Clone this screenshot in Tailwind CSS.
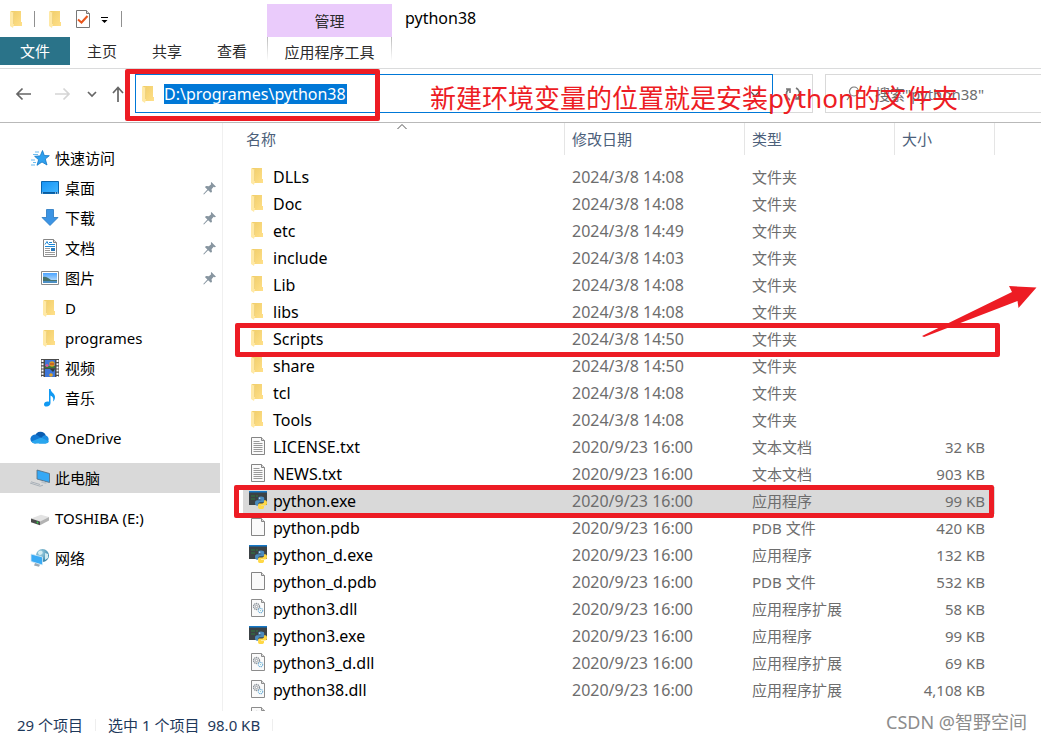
<!DOCTYPE html>
<html lang="zh-CN">
<head>
<meta charset="utf-8">
<title>python38</title>
<script src="https://cdn.jsdelivr.net/npm/@tailwindcss/browser@4"></script>
</head>
<body class="relative flex h-screen flex-col overflow-hidden bg-white font-['Noto_Sans','Noto_Sans_CJK_SC',sans-serif] text-[15px] leading-5 text-black">

<svg class="absolute size-0" aria-hidden="true">
  <defs>
    <linearGradient id="gf" x1="0" x2="1" y1="0" y2="1"><stop offset="0" stop-color="#f0cd69"/><stop offset="1" stop-color="#ffe08a"/></linearGradient>
    <linearGradient id="gs" x1="0" x2="0" y1="0" y2="1"><stop offset="0" stop-color="#4aa3ff"/><stop offset="1" stop-color="#d9edfb"/></linearGradient>
    <linearGradient id="gm" x1="0" x2="1" y1="0" y2="1"><stop offset="0" stop-color="#1593f5"/><stop offset="1" stop-color="#45b8ff"/></linearGradient>
    <radialGradient id="gg" cx=".35" cy=".3" r=".8"><stop offset="0" stop-color="#a9d8e8"/><stop offset="1" stop-color="#27789f"/></radialGradient>
  </defs>
  <symbol id="folder" viewBox="0 0 18 18"><path d="M3 1h10v11h1v4H4z" fill="url(#gf)"/><path d="M2 1l4 2v11l-1 4-3-2z" fill="#ffe9a6"/><path d="M5.500 3v11" stroke="#e6c566" stroke-width=".6"/></symbol>
  <symbol id="txt" viewBox="0 0 18 18"><path d="M2.500.5h10l3 3v14h-13z" fill="#fafafa" stroke="#858585"/><path d="M12.500.5v3h3" fill="#ddd" stroke="#858585"/><path d="M4.500 4.500h6M4.500 6.500h9M4.500 8.500h9M4.500 10.500h9M4.500 12.500h9M4.500 14.500h9" stroke="#999"/></symbol>
  <symbol id="blank" viewBox="0 0 18 18"><path d="M2.500.5h10l3 3v14h-13z" fill="#fafafa" stroke="#858585"/><path d="M12.500.5v3h3" fill="#ddd" stroke="#858585"/></symbol>
  <symbol id="dll" viewBox="0 0 18 18"><path d="M2.500.5h10l3 3v14h-13z" fill="#fafafa" stroke="#8c8c8c"/><path d="M12.500.5v3h3" fill="#ddd" stroke="#8c8c8c"/><circle cx="7.500" cy="7.500" r="3" fill="#eee" stroke="#8b9299" stroke-width="1.300" stroke-dasharray="1.300 .6"/><circle cx="7.500" cy="7.500" r="1.200" fill="#fff" stroke="#8b9299" stroke-width=".8"/><circle cx="11.500" cy="11.500" r="2.200" fill="#fff" stroke="#76b2d8" stroke-width="1.200" stroke-dasharray="1.200 .5"/><circle cx="11.500" cy="11.500" r=".7" fill="#9cc"/></symbol>
  <symbol id="py" viewBox="0 0 18 18"><path d="M0 0h18v14H0z" fill="#3c4245"/><path d="M0 0h18v1.500H0z" fill="#1578c8"/><path d="M2 5h4M7 5h2M2 8h4" stroke="#2f7a3e"/><path d="M12 5.500c-2.300 0-2.700.8-2.700 1.800v1.400h3v.6H8.200C6.800 9.300 6 10.300 6 12s.8 2.700 2 2.700h1.200v-1.500c0-1 .8-1.900 1.900-1.900h2.700c.8 0 1.400-.6 1.400-1.400V7.300c0-1.100-1-1.800-3.200-1.800z" fill="#4b8bbe"/><path d="M12.200 18c2.300 0 2.800-.8 2.800-1.800V15h-3v-.6h4c1.400 0 2-.8 2-2.500s-.6-2.700-1.800-2.700h-1.100v1.400c0 1-.8 1.900-1.900 1.900h-2.700c-.8 0-1.400.6-1.400 1.400v2.500c0 1.100 1 1.600 3.100 1.600z" fill="#ffd845"/><circle cx="10.700" cy="7.200" r=".6" fill="#fff"/></symbol>
  <symbol id="star" viewBox="0 0 20 18"><path d="M12.500 1.500l1.800 5 5 .2-4 3.300 1.700 6-5-3-5 3.300 1.600-5.600-4-3.400 5.600-.4z" fill="#2fa0ee" stroke="#1276c4" stroke-width=".8"/><path d="M5 3h4M3 5.500h5M1 11h4M3 13.500h3M1 16h4" stroke="#6bbcf0"/></symbol>
  <symbol id="desktop" viewBox="0 0 18 18"><path d="M.5 2.500h17v12H.5z" fill="url(#gm)" stroke="#0b66ae"/><path d="M1 13.500h16" stroke="#0a5a9c"/><path d="M1 14h1M14 14h1M16 14h1" stroke="#fff"/></symbol>
  <symbol id="down" viewBox="0 0 18 18"><path d="M5.500.5h7v8H17l-8 8-8-8h4.500z" fill="#3c94e4" stroke="#2677c0" stroke-width=".8"/></symbol>
  <symbol id="doc" viewBox="0 0 18 18"><path d="M2.500.5h10l3 3v14h-13z" fill="#fff" stroke="#858585"/><path d="M12.500.5v3h3" fill="#ddd" stroke="#858585"/><path d="M4 5.500l2-3 1.500 3M8 3.500h3M8 5.500h6M4 7.500h10" stroke="#1b87d6" fill="none"/><path d="M4 9.500h5M4 11.500h5M4 13.500h10M4 15.500h10" stroke="#999"/><path d="M10 9h4v3h-4z" fill="#2c79b8"/></symbol>
  <symbol id="pic" viewBox="0 0 18 18"><path d="M.5 2.500h17v13H.5z" fill="#fff" stroke="#8a8a8a"/><path d="M2 4h14v10H2z" fill="url(#gs)"/><path d="M2 8c3-1 5 1 8 3l6 0v1.500H2z" fill="#47716b"/><path d="M2 12h14v2H2z" fill="#4c8fc4"/></symbol>
  <symbol id="video" viewBox="0 0 18 18"><path d="M0 0h18v18H0z" fill="#4a4a4a"/><path d="M1.500 1v17M16.500 1v17" stroke="#fff" stroke-width="2" stroke-dasharray="2 1.200"/><path d="M4 1h10v8H4zM4 10h10v8H4z" fill="#3e76d8"/><path d="M4 7h10v2H4z" fill="#397a35"/><circle cx="11" cy="5" r="2.700" fill="#d89a24"/><path d="M9 5h4" stroke="#b73526"/><circle cx="6" cy="6.500" r="1.500" fill="#d75a9a"/><path d="M9 10h5l-2 3z" fill="#313b36"/><circle cx="10" cy="16" r="1.800" fill="#e2a427"/></symbol>
  <symbol id="music" viewBox="0 0 18 18"><path d="M8 0h1.500c.5 3.500 4.500 4.500 4.500 8 0 2-.8 3.500-2 4.500 1-3.500-.5-5-2.500-6V14c0 2-1.800 3.500-3.800 3.500S3 16.600 3 15.200 4.500 12.500 6.500 12.500c.6 0 1.100.1 1.500.3z" fill="#1199f2"/></symbol>
  <symbol id="cloud" viewBox="0 0 20 18"><path d="M5 7a5.700 5.700 0 0 1 10.800-.5L10 12z" fill="#0a5cb0"/><path d="M5 14.500A4.500 4.500 0 1 1 7 6l8 6z" fill="#1278d2"/><path d="M12 8a4 4 0 0 1 4-1.600 4.300 4.300 0 0 1-.5 8.100H9z" fill="#1c8de2"/><path d="M1.500 12.500L11 8.500l8 4c-.6 1.200-1.800 2-3.500 2H5c-1.500 0-2.800-.8-3.500-2z" fill="#29a6ee"/></symbol>
  <symbol id="pc" viewBox="0 0 20 18"><path d="M7 1l12.500 3.500v9L7 10z" fill="#35a8f5" stroke="#57697a" stroke-width=".8"/><path d="M12 12l-1 1.500 5 1.500 1-1.500" fill="#b8c2ca"/><path d="M0 14l10 3.200 3-1M1 12.800l9 2.700" stroke="#a8b0b8" fill="none"/></symbol>
  <symbol id="drive" viewBox="0 0 20 18"><path d="M1 9.500l10-3.700 8 2.200-9 4.500z" fill="#e3e3e3"/><path d="M1 9.500l9 3v3.800l-9-3z" fill="#4b4b4b"/><path d="M10 12.500L19 8v3.500l-9 4.800z" fill="#b3b3b3"/><circle cx="7.500" cy="13.500" r=".9" fill="#35d24a"/></symbol>
  <symbol id="net" viewBox="0 0 20 18"><circle cx="12.500" cy="6.500" r="6.500" fill="url(#gg)"/><path d="M8 3c3-3 6 0 4 2s-4 1-4-2zM15 4l3 1v4l-3 2z" fill="#d3ecf1"/><path d="M1 5l11.500 3v8L1 12.500z" fill="#3aabf5" stroke="#d6ebf7" stroke-width=".8"/><path d="M5 14l-1 2.500 5 1.200 1-2" fill="#9aa9b5"/></symbol>
  <symbol id="pin" viewBox="0 0 14 14"><path d="M9 0l5 5-1.500.6-1-.4-2.300 2.500.5 2.800-1.200 1.200-3-2.700L1 13.500.3 13 4.700 8 2 5.500 3.500 4.300l2.800.4L8.800 2.400 8.400 1z" fill="#8795a0"/></symbol>
</svg>

<!-- Title bar and ribbon tabs -->
<header class="flex h-[69px] shrink-0 border-b border-[#dadbdc]">
  <div class="flex w-[267px] shrink-0 flex-col">
    <div class="flex h-[37px] items-center pl-2">
      <svg class="size-[18px]"><use href="#folder"/></svg>
      <span class="ml-2 h-4 w-px bg-[#909090]"></span>
      <svg class="ml-3 size-[18px]"><use href="#folder"/></svg>
      <button class="ml-[10px] size-[18px]" aria-label="属性"><svg class="size-[18px]" viewBox="0 0 18 18"><path d="M1.500.5h10l3 3v14h-13z" fill="#fff" stroke="#777"/><path d="M11.500.5v3h3" fill="#ddd" stroke="#777"/><path d="M3 9.500l3.500 3 6-6.500" fill="none" stroke="#e8561c" stroke-width="2"/></svg></button>
      <button class="ml-[6px] size-3" aria-label="自定义快速访问工具栏"><svg class="size-3" viewBox="0 0 12 12"><path d="M2 4h7v1H2zM2.500 7h6l-3 3z"/></svg></button>
      <span class="ml-[10px] h-4 w-px bg-[#909090]"></span>
    </div>
    <nav class="flex h-7 text-[#2b2b2b]">
      <button class="w-[70px] bg-[#2a7389] text-white">文件</button>
      <button class="w-16">主页</button>
      <button class="w-[66px]">共享</button>
      <button class="w-16">查看</button>
    </nav>
  </div>
  <div class="flex w-[125px] shrink-0 flex-col pt-1 text-[#2b2b2b]">
    <div class="flex h-[33px] items-center justify-center bg-[#eacbfb]">管理</div>
    <div class="flex h-6">
      <span class="w-px bg-linear-to-b from-[#bbb] to-white"></span>
      <button class="h-[30px] flex-1 whitespace-nowrap">应用程序工具</button>
      <span class="w-px bg-linear-to-b from-[#bbb] to-white"></span>
    </div>
  </div>
  <h1 class="pt-2 pl-[13px] text-base leading-5">python38</h1>
</header>

<!-- Address bar -->
<div class="flex h-[54px] shrink-0 border-b border-[#b9b9b9] pt-[5px]">
  <div class="flex h-10 w-[135px] shrink-0 items-center pl-[15px]">
    <button aria-label="后退"><svg class="h-4 w-[18px]" viewBox="0 0 18 16" fill="none" stroke="#666" stroke-width="1.700"><path d="M16 8H2M7.500 2.500L2 8l5.500 5.500"/></svg></button>
    <button class="ml-[21px]" aria-label="前进"><svg class="h-4 w-[18px]" viewBox="0 0 18 16" fill="none" stroke="#d5d5d5" stroke-width="1.700"><path d="M1 8h14M9.500 2.500L15 8l-5.500 5.500"/></svg></button>
    <button class="ml-[15px]" aria-label="最近浏览的位置"><svg class="h-3 w-[10px]" viewBox="0 0 10 12" fill="none" stroke="#666" stroke-width="1.700"><path d="M1 4l4 4 4-4"/></svg></button>
    <button class="ml-[15px]" aria-label="上移"><svg class="h-[18px] w-3" viewBox="0 0 12 18" fill="none" stroke="#666" stroke-width="1.700"><path d="M6 17V3M1 8l5-5.500L11 8"/></svg></button>
  </div>
  <div class="flex h-[39px] w-[638px] shrink-0 items-center border border-[#0078d7] pl-1">
    <svg class="size-[18px] shrink-0"><use href="#folder"/></svg>
    <input class="ml-[6px] h-5 w-[183px] bg-[#0078d7] text-base leading-5 text-white outline-none" aria-label="地址" value="D:\programes\python38">
    <button class="mr-3 ml-auto" aria-label="历史记录"><svg class="h-3 w-[10px]" viewBox="0 0 10 12" fill="none" stroke="#555" stroke-width="1.300"><path d="M1 4l4 4 4-4"/></svg></button>
  </div>
  <button class="flex h-[39px] w-10 shrink-0 items-center justify-center border border-l-0 border-[#d9d9d9]" aria-label="刷新"><svg class="size-[18px]" viewBox="0 0 18 18" fill="none" stroke="#777" stroke-width="1.600"><path d="M6 15A6.500 6.500 0 0 1 5 4M2 4h4v4M12 3a6.500 6.500 0 0 1 1 11M16 14h-4v-4"/></svg></button>
  <label class="ml-3 flex h-[39px] min-w-0 flex-1 items-center border border-r-0 border-[#d9d9d9] pl-5">
    <svg class="size-4 shrink-0" viewBox="0 0 16 16" fill="none" stroke="#777" stroke-width="1.200"><circle cx="8" cy="5.500" r="4.500"/><path d="M4.500 9L1 14"/></svg>
    <input class="ml-[13px] min-w-0 flex-1 outline-none placeholder:text-[#6d6d6d]" aria-label="搜索" placeholder='搜索"python38"'>
  </label>
</div>

<main class="flex min-h-0 flex-1 overflow-hidden">
  <!-- Navigation pane -->
  <nav class="w-[223px] shrink-0 border-r border-[#f0f0f0] pt-5 pr-[2px]" aria-label="导航窗格" id="nav"></nav>
  <!-- File list -->
  <section class="min-w-0 flex-1 pl-5">
    <table class="w-[752px] table-fixed border-collapse text-left">
      <colgroup><col class="w-[322px]"><col class="w-[180px]"><col class="w-[150px]"><col class="w-[100px]"></colgroup>
      <thead class="text-[#4c607a]">
        <tr class="h-10 align-top">
          <th class="relative p-0 font-normal"><div class="h-8 border-r border-[#e5e5e5] pt-[6px] pl-[3px]">名称</div>
            <svg class="absolute top-0 left-[153px] h-2 w-3" viewBox="0 0 12 8" fill="none" stroke="#555"><path d="M1.500 6L6 1.500 10.500 6"/></svg></th>
          <th class="p-0 font-normal"><div class="h-8 border-r border-[#e5e5e5] pt-[6px] pl-[7px]">修改日期</div></th>
          <th class="p-0 font-normal"><div class="h-8 border-r border-[#e5e5e5] pt-[6px] pl-[7px]">类型</div></th>
          <th class="p-0 font-normal"><div class="h-8 border-r border-[#e5e5e5] pt-[6px] pl-[7px]">大小</div></th>
        </tr>
      </thead>
      <tbody id="files"></tbody>
    </table>
  </section>
</main>

<footer class="flex h-[29px] shrink-0 items-center gap-3 pb-[2px] pl-[17px] text-[#1e395b]">
  <span>29 个项目</span><span class="h-3 w-px bg-[#eee]"></span>
  <span>选中 1 个项目</span><span class="-ml-1">98.0 KB</span><span class="h-3 w-px bg-[#eee]"></span>
</footer>

<!-- Annotations drawn over the window -->
<div class="pointer-events-none absolute top-[69px] left-[125px] h-[52px] w-[255px] rounded-xs border-5 border-[#ed1c24]"></div>
<div class="pointer-events-none absolute top-[323px] left-[235px] h-[34px] w-[765px] rounded-xs border-5 border-[#ed1c24]"></div>
<div class="pointer-events-none absolute top-[485px] left-[234px] h-[33px] w-[760px] rounded-xs border-5 border-[#ed1c24]"></div>
<p class="pointer-events-none absolute top-[82px] left-[430px] text-[26px] leading-8 whitespace-nowrap text-[#ed1c24]">新建环境变量的位置就是安装python的文件夹</p>
<svg class="pointer-events-none absolute top-[280px] left-[920px] h-[60px] w-[121px]" viewBox="0 0 121 60"><path d="M2 56L92 12l-3-6 27.500 1.500L98.500 28l-1-7L4 57z" fill="#ed1c24"/></svg>
<p class="pointer-events-none absolute right-[14px] bottom-[6px] text-lg leading-6 text-[#8c8c8c]">CSDN @智野空间</p>

<script>
const icon = (id, cls) => `<svg class="${cls}" aria-hidden="true"><use href="#${id}"/></svg>`;
const places = [
  ['star', '快速访问', 1], ['desktop', '桌面', 2, 1], ['down', '下载', 2, 1], ['doc', '文档', 2, 1], ['pic', '图片', 2, 1],
  ['folder', 'D', 2], ['folder', 'programes', 2], ['video', '视频', 2], ['music', '音乐', 2],
  ['cloud', 'OneDrive', 1], ['pc', '此电脑', 1], ['drive', 'TOSHIBA (E:)', 1], ['net', '网络', 1]
];
document.getElementById('nav').innerHTML = places.map(([i, name, level, pinned], n) =>
  `<a href="#" class="flex h-[30px] items-center ${level === 1 ? 'pl-[30px]' : 'pl-[41px]'} ${n > 8 ? 'mt-[10px]' : ''} ${i === 'pc' ? 'bg-[#d9d9d9]' : ''}">`
  + icon(i, level === 1 ? 'h-[18px] w-5 mr-[5px]' : 'size-[18px] mr-[6px]')
  + `<span>${name}</span>` + (pinned ? icon('pin', 'ml-auto mr-1 size-[13px]') : '') + '</a>').join('');

const dir = (name, time) => ['folder', name, '2024/3/8 ' + time, '文件夹', ''];
const file = (i, name, type, size) => [i, name, '2020/9/23 16:00', type, size + ' KB'];
const rows = [
  dir('DLLs', '14:08'), dir('Doc', '14:08'), dir('etc', '14:49'), dir('include', '14:03'), dir('Lib', '14:08'),
  dir('libs', '14:08'), dir('Scripts', '14:50'), dir('share', '14:50'), dir('tcl', '14:08'), dir('Tools', '14:08'),
  file('txt', 'LICENSE.txt', '文本文档', '32'), file('txt', 'NEWS.txt', '文本文档', '903'),
  file('py', 'python.exe', '应用程序', '99'), file('blank', 'python.pdb', 'PDB 文件', '420'),
  file('py', 'python_d.exe', '应用程序', '132'), file('blank', 'python_d.pdb', 'PDB 文件', '532'),
  file('dll', 'python3.dll', '应用程序扩展', '58'), file('py', 'python3.exe', '应用程序', '99'),
  file('dll', 'python3_d.dll', '应用程序扩展', '69'), file('dll', 'python38.dll', '应用程序扩展', '4,108'),
  ['dll', '', '', '', '']
];
document.getElementById('files').innerHTML = rows.map(([i, name, date, type, size]) =>
  `<tr class="h-[27px] text-[#6d6d6d] ${name === 'python.exe' ? 'bg-[#d9d9d9]' : ''}">`
  + `<td class="p-0"><div class="flex items-center gap-[6px] pl-[6px] text-base leading-5 text-black">${icon(i, 'size-[18px] mb-[2px]')}<span>${name}</span></div></td>`
  + `<td class="p-0 pl-[7px] text-base leading-5">${date}</td><td class="p-0 pl-[7px]">${type}</td><td class="p-0 pr-[10px] text-right">${size}</td></tr>`).join('');
</script>
</body>
</html>
